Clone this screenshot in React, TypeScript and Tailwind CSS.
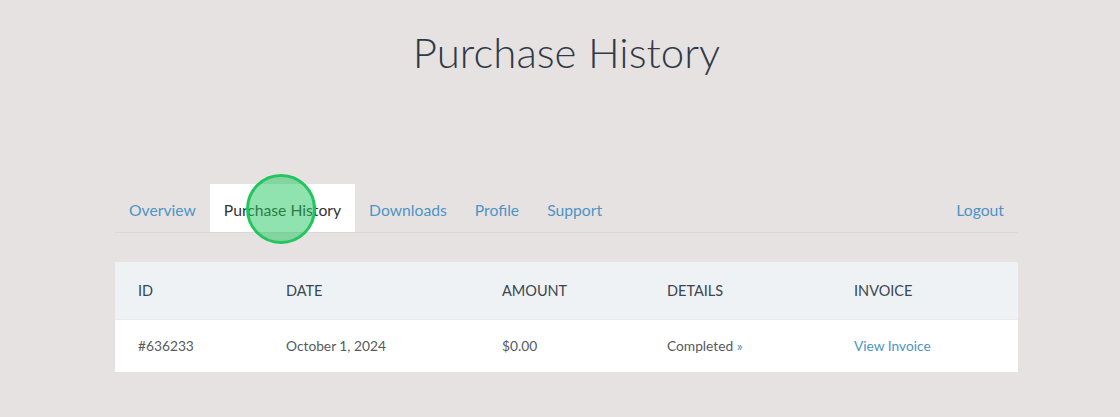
import React from "react";

export default function App() {
  const font = { fontFamily: '"Source Sans Pro", Lato, "Noto Sans", sans-serif' };
  return (
    <div className="min-h-[417px] w-full bg-[#e7e2e2] text-[#3b4550]" style={font}>
      <div className="ml-[115px] w-[903px]">
        <h1 className="pt-[20px] text-center text-[42px] font-light leading-[64px] text-[#2f3a46]">
          Purchase History
        </h1>
        <div className="relative mt-[100px] flex items-stretch border-b border-[#dcd8d8] text-[15.7px]">
          <a className="px-[14px] pt-[15px] pb-[11px] leading-[22px] text-[#4d94c4]">Overview</a>
          <a className="bg-white px-[14px] pt-[15px] pb-[11px] leading-[22px] text-[#333]">Purchase History</a>
          <a className="px-[14px] pt-[15px] pb-[11px] leading-[22px] text-[#4d94c4]">Downloads</a>
          <a className="px-[14px] pt-[15px] pb-[11px] leading-[22px] text-[#4d94c4]">Profile</a>
          <a className="px-[14px] pt-[15px] pb-[11px] leading-[22px] text-[#4d94c4]">Support</a>
          <a className="ml-auto px-[14px] pt-[15px] pb-[11px] leading-[22px] text-[#4d94c4]">Logout</a>
          <div className="absolute left-[131px] top-[-10px] h-[70px] w-[70px] rounded-full border-[3px] border-[#22c55e] bg-[#22c55e]/50" />
        </div>
        <div className="mt-[29px] bg-white">
          <div className="grid h-[58px] grid-cols-[148px_216px_165px_187px_1fr] items-center border-b border-[#e8ecef] bg-[#eef2f5] text-[14.5px] uppercase text-[#3b4550]">
            <div className="pl-[23px]">ID</div>
            <div className="pl-[23px]">Date</div>
            <div className="pl-[23px]">Amount</div>
            <div className="pl-[23px]">Details</div>
            <div className="pl-[23px]">Invoice</div>
          </div>
          <div className="grid h-[52px] grid-cols-[148px_216px_165px_187px_1fr] items-center text-[13.75px] text-[#555a60]">
            <div className="pl-[23px]">#636233</div>
            <div className="pl-[23px]">October 1, 2024</div>
            <div className="pl-[23px]">$0.00</div>
            <div className="pl-[23px]">
              Completed <span className="text-[#4d94c4]">»</span>
            </div>
            <div className="pl-[23px] text-[#4d94c4]">View Invoice</div>
          </div>
        </div>
      </div>
    </div>
  );
}
